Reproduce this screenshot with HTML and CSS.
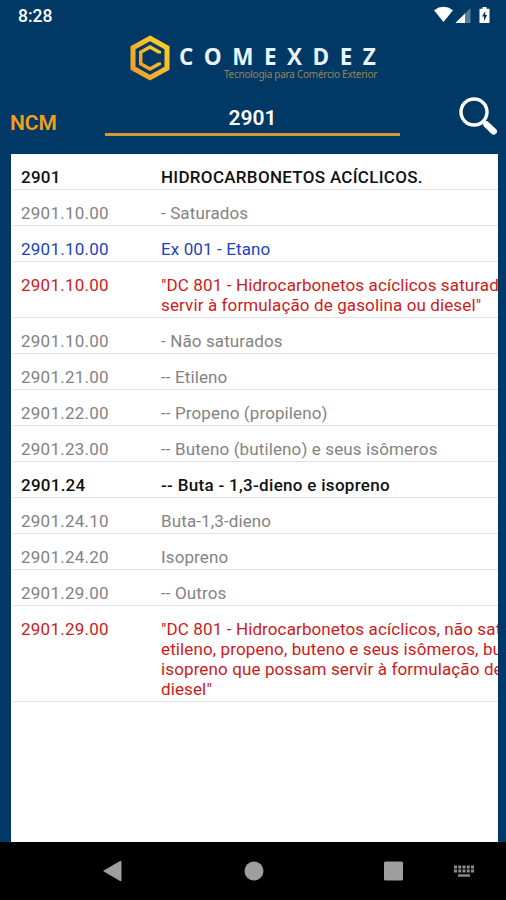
FILE: index.html
```
<!DOCTYPE html>
<html lang="pt-BR">

<head>
    <meta charset="UTF-8">
    <meta name="viewport" content="width=device-width, initial-scale=1.0">
    <title>Comexdez</title>
    <link rel="stylesheet" href="styles.css">
</head>

<body>
    <div class="status-bar">
        <span class="clock">8:28</span>
        <svg class="status-icons" width="58" height="20" viewBox="0 0 58 20">
            <!-- wifi -->
            <path d="M1 5.2 Q10.500 -1.600 20 5.200 L10.500 17z" fill="#fff" />
            <!-- signal -->
            <path d="M37.500 3v15H22.500z" fill="#547c9f" />
            <path d="M32 8.500v9.500H22.500z" fill="#fff" />
            <!-- battery -->
            <path d="M49.500 2h4v1.700h3V18h-10V3.700h3z" fill="#fff" />
            <path d="M52.300 6l-3.300 5.600h2V16l3.200-6h-1.900z" fill="#003866" />
        </svg>
    </div>
    <div class="brand">
        <svg class="brand-mark" width="42" height="48" viewBox="0 0 42 48">
            <defs>
                <linearGradient id="gold" x1="0" y1="1" x2="1" y2="0">
                    <stop offset="0" stop-color="#f39a25" />
                    <stop offset="1" stop-color="#fcd12f" />
                </linearGradient>
            </defs>
            <path d="M21 4.300L38 13.700v20.600L21 43.700 4 34.300V13.700z" fill="none" stroke="url(#gold)" stroke-width="5" />
            <path d="M30.300 19.500v-1.200L21 13l-9.300 5.300v11.400L21 35l9.300-5.300v-1.200" fill="none" stroke="url(#gold)" stroke-width="3.500" />
        </svg>
        <div class="brand-text">
            <div class="brand-name">COMEXDEZ</div>
            <div class="brand-slogan">Tecnologia para Comércio Exterior</div>
        </div>
    </div>
    <div class="search">
        <label class="search-label">NCM</label>
        <div class="search-input">2901</div>
        <svg class="search-icon" width="42" height="42" viewBox="0 0 42 42">
            <circle cx="16" cy="16" r="13" fill="none" stroke="#fff" stroke-width="3.400" />
            <path d="M25 25l3 3" stroke="#fff" stroke-width="3" />
            <path d="M28.500 28.500l7.200 6.800" stroke="#fff" stroke-width="6.500" stroke-linecap="round" />
        </svg>
    </div>
    <div class="list">
        <div class="row title"><span>2901</span><p>HIDROCARBONETOS ACÍCLICOS.</p></div>
        <div class="row"><span>2901.10.00</span><p>- Saturados</p></div>
        <div class="row ex"><span>2901.10.00</span><p>Ex 001 - Etano</p></div>
        <div class="row dc"><span>2901.10.00</span><p>"DC 801 - Hidrocarbonetos acíclicos saturad<br>servir à formulação de gasolina ou diesel"</p></div>
        <div class="row"><span>2901.10.00</span><p>- Não saturados</p></div>
        <div class="row"><span>2901.21.00</span><p>-- Etileno</p></div>
        <div class="row"><span>2901.22.00</span><p>-- Propeno (propileno)</p></div>
        <div class="row"><span>2901.23.00</span><p>-- Buteno (butileno) e seus isômeros</p></div>
        <div class="row title"><span>2901.24</span><p>-- Buta - 1,3-dieno e isopreno</p></div>
        <div class="row"><span>2901.24.10</span><p>Buta-1,3-dieno</p></div>
        <div class="row"><span>2901.24.20</span><p>Isopreno</p></div>
        <div class="row"><span>2901.29.00</span><p>-- Outros</p></div>
        <div class="row dc"><span>2901.29.00</span><p>"DC 801 - Hidrocarbonetos acíclicos, não sat<br>etileno, propeno, buteno e seus isômeros, bu<br>isopreno que possam servir à formulação de<br>diesel"</p></div>
    </div>
    <div class="nav-bar">
        <svg width="506" height="58" viewBox="0 0 506 58">
            <g fill="#9e9e9e">
                <path d="M103 29l17-10q1.500-.5 1.500 1v18q0 1.500-1.500 1z" />
                <circle cx="254" cy="29" r="9.500" />
                <rect x="384" y="19.500" width="19" height="19" rx="1.500" />
            </g>
            <!-- keyboard -->
            <path d="M454 25h20M454 29h20" stroke="#8c8c8c" stroke-width="2.800" stroke-dasharray="3 1.250" />
            <path d="M458 33.500h12" stroke="#8c8c8c" stroke-width="2.400" />
        </svg>
    </div>
</body>

</html>
```
FILE: styles.css
```
* {
    margin: 0;
    padding: 0;
    box-sizing: border-box;
}

body {
    display: flex;
    flex-direction: column;
    height: 900px;
    background-color: #003866;
    font-family: Roboto, sans-serif;
    overflow: hidden;
}

.status-bar {
    display: flex;
    justify-content: space-between;
    height: 34px;
    padding: 5px 15px 0 18px;
}
.clock {
    color: #fff;
    font-size: 17.5px;
    font-weight: 500;
    line-height: 23px;
}

.brand {
    display: flex;
    height: 62px;
    padding-left: 129px;
}
.brand-text {
    padding: 12px 0 0 8px;
    white-space: nowrap;
}
.brand-name {
    color: #e9f4ff;
    font-family: "Open Sans", sans-serif;
    font-size: 22.5px;
    font-weight: 700;
    line-height: 22px;
    letter-spacing: 10.5px;
}
.brand-slogan {
    margin: 0 0 0 45px;
    color: #9a8458;
    font-family: "Noto Sans", sans-serif;
    font-size: 10px;
    line-height: 12px;
    letter-spacing: -0.25px;
}

.search {
    display: flex;
    height: 57px;
    padding-left: 10px;
}
.search-label {
    width: 95px;
    padding-top: 14px;
    color: #f0a020;
    font-size: 21px;
    font-weight: 600;
    line-height: 26px;
}
.search-input {
    width: 295px;
    height: 40px;
    padding-top: 9px;
    border-bottom: 3px solid #d9982f;
    color: #fff;
    font-size: 21px;
    font-weight: 600;
    line-height: 26px;
    text-align: center;
}
.search-icon {
    margin-left: 58px;
}

.list {
    flex: 1;
    margin: 1px 8px 0 11px;
    background-color: #fff;
    overflow: hidden;
}
.row {
    display: flex;
    margin-left: 2px;
    padding: 13px 0 2px 8px;
    border-bottom: 1px solid #e0e0e0;
    color: #838383;
    font-size: 17px;
    line-height: 20px;
    letter-spacing: 0.12px;
    white-space: nowrap;
}
.row span {
    flex: 0 0 140px;
    letter-spacing: 0.25px;
}
.title {
    color: #111;
    font-weight: 500;
    letter-spacing: 0.3px;
}
.ex {
    color: #1c43c0;
}
.dc {
    color: #cc1a1a;
}

.nav-bar {
    height: 58px;
    background-color: #000;
}
```
